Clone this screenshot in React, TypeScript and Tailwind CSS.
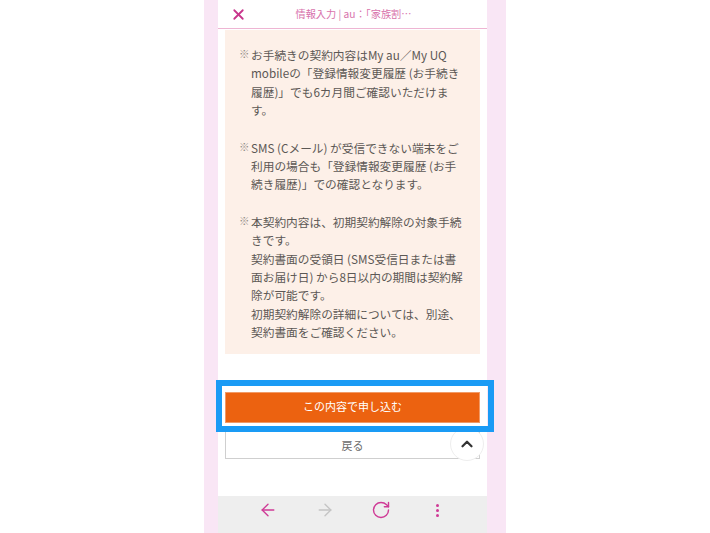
import React from 'react';
import { X, ArrowLeft, ArrowRight, RotateCw, ChevronUp } from 'lucide-react';

const font = { fontFamily: '"Noto Sans CJK JP", "Liberation Sans", sans-serif' };

const Note: React.FC<{ lines: string[] }> = ({ lines }) => (
  <div className="relative pl-[26px]">
    <span className="absolute left-[14px] top-[-1px] text-[10.5px] text-[#8f8a86]">※</span>
    {lines.map((l, i) => (
      <p key={i} className="whitespace-nowrap">{l}</p>
    ))}
  </div>
);

export default function App() {
  return (
    <div className="w-[710px] h-[533px] bg-white flex justify-center overflow-hidden" style={font}>
      <div className="w-[302px] h-full bg-[#f9e6f5] pl-[14px] pr-[19px]">
        <div className="relative w-[269px] h-full bg-white flex flex-col">
          <header className="relative h-[29px] flex items-center justify-center border-b border-[#eeb5d3] shrink-0">
            <X className="absolute left-[11.5px] top-[5.5px] w-[17px] h-[17px] text-[#c8358c]" strokeWidth={2.5} />
            <span className="text-[10.2px] text-[#d873ac] pl-[2px]">情報入力 | au：「家族割…</span>
          </header>

          <div className="mx-[7px] mt-[1px] h-[324px] bg-[#fdf0e8] pt-[16px] text-[11.7px] leading-[18.4px] text-[#5c5855] shrink-0">
            <Note lines={['お手続きの契約内容はMy au／My UQ', 'mobileの「登録情報変更履歴 (お手続き', '履歴)」でも6カ月間ご確認いただけま', 'す。']} />
            <div className="h-[19px]" />
            <Note lines={['SMS (Cメール) が受信できない端末をご', '利用の場合も「登録情報変更履歴 (お手', '続き履歴)」での確認となります。']} />
            <div className="h-[19px]" />
            <Note lines={['本契約内容は、初期契約解除の対象手続', 'きです。', '契約書面の受領日 (SMS受信日または書', '面お届け日) から8日以内の期間は契約解', '除が可能です。', '初期契約解除の詳細については、別途、', '契約書面をご確認ください。']} />
          </div>

          <button className="mx-[7px] mt-[38px] h-[31px] pb-[2px] bg-[#ec6210] border border-[#f29a66] text-white text-[11px] shrink-0">この内容で申し込む</button>
          <button className="mx-[7px] mt-[8px] h-[28px] bg-white border border-[#cfcfcf] text-[#6b6b6b] text-[11px] shrink-0">戻る</button>

          <div className="mt-auto h-[37px] bg-[#eeeeee] flex items-start shrink-0 pt-[4px] pl-[40px] gap-[36.5px]">
            <ArrowLeft className="w-[20px] h-[20px] text-[#cf3a96]" strokeWidth={1.6} />
            <ArrowRight className="w-[20px] h-[20px] text-[#c4c4c4]" strokeWidth={1.6} />
            <RotateCw className="w-[20px] h-[20px] text-[#cf3a96]" strokeWidth={1.7} />
            <div className="w-[20px] h-[20px] flex flex-col items-center justify-center gap-[2px]">
              <span className="w-[3px] h-[3px] rounded-full bg-[#cf3a96]" />
              <span className="w-[3px] h-[3px] rounded-full bg-[#cf3a96]" />
              <span className="w-[3px] h-[3px] rounded-full bg-[#cf3a96]" />
            </div>
          </div>

          {/* scroll-to-top button, partly under the highlight */}
          <div className="absolute left-[232px] top-[427px] w-[34px] h-[34px] rounded-full bg-white border border-[#eeeeee] flex items-center justify-center">
            <ChevronUp className="w-[18px] h-[18px] text-[#333]" strokeWidth={3} />
          </div>
          {/* highlight frame over the submit button */}
          <div className="absolute left-[-2px] top-[380px] w-[278px] h-[52px] border-[6px] border-[#1a9bf5]" />
        </div>
      </div>
    </div>
  );
}
